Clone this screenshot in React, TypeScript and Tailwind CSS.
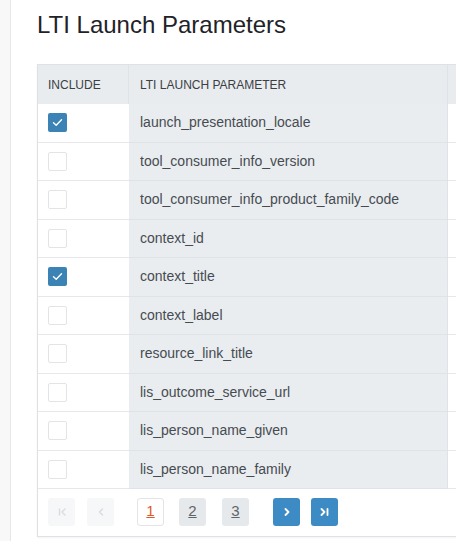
import React from "react";

const rows: { name: string; checked: boolean }[] = [
  { name: "launch_presentation_locale", checked: true },
  { name: "tool_consumer_info_version", checked: false },
  { name: "tool_consumer_info_product_family_code", checked: false },
  { name: "context_id", checked: false },
  { name: "context_title", checked: true },
  { name: "context_label", checked: false },
  { name: "resource_link_title", checked: false },
  { name: "lis_outcome_service_url", checked: false },
  { name: "lis_person_name_given", checked: false },
  { name: "lis_person_name_family", checked: false },
];

function Check({ checked }: { checked: boolean }) {
  if (checked)
    return (
      <div className="w-[19px] h-[19px] rounded-[2px] bg-[#3b82b5] flex items-center justify-center">
        <svg width="11" height="9" viewBox="0 0 11 9" fill="none">
          <path d="M1.5 4.8 L4.2 7.3 L9.5 1.7" stroke="white" strokeWidth="1.4" strokeLinecap="round" strokeLinejoin="round" />
        </svg>
      </div>
    );
  return <div className="w-[19px] h-[19px] rounded-[2px] bg-white border border-[#e2e4e7]" />;
}

function Chevron({ dir, bar, color }: { dir: "l" | "r"; bar?: boolean; color: string }) {
  return (
    <svg width="12" height="10" viewBox="0 0 12 10" fill="none">
      {dir === "r" ? (
        <>
          <path d={bar ? "M2.5 2 L5.5 5 L2.5 8" : "M4.5 2 L7.5 5 L4.5 8"} stroke={color} strokeWidth="1.8" strokeLinecap="round" strokeLinejoin="round" />
          {bar && <path d="M8.5 2 L8.5 8" stroke={color} strokeWidth="1.8" strokeLinecap="round" />}
        </>
      ) : (
        <>
          <path d={bar ? "M9 2 L6 5 L9 8" : "M7.5 2 L4.5 5 L7.5 8"} stroke={color} strokeWidth="1.4" strokeLinecap="round" strokeLinejoin="round" />
          {bar && <path d="M3.5 2 L3.5 8" stroke={color} strokeWidth="1.4" strokeLinecap="round" />}
        </>
      )}
    </svg>
  );
}

export default function App() {
  return (
    <div
      className="flex w-[456px] h-[541px] overflow-hidden bg-white"
      style={{ fontFamily: '"Liberation Sans", Arial, sans-serif' }}
    >
      <div className="w-[11px] shrink-0 bg-[#f8f8f8] border-r border-[#e6e6e6]" />
      <div className="flex-1 pl-[26px] min-w-0">
        <h1 className="pt-[11px] text-[24px] leading-[28px] text-[#1f2328] font-normal whitespace-nowrap">
          LTI Launch Parameters
        </h1>
        <div className="mt-[25px] w-[480px] border-l border-b border-t border-[#dee2e6] shadow-[0_1px_2px_rgba(0,0,0,0.05)]">
          <div className="flex h-[39px] bg-[#e9ecef] text-[12px] text-[#3a3f44] uppercase">
            <div className="w-[91px] shrink-0 pl-[10px] flex items-center border-r border-[#dfe3e7]">Include</div>
            <div className="w-[319px] shrink-0 pl-[11px] flex items-center border-r border-[#dfe3e7]">LTI Launch Parameter</div>
            <div className="flex-1" />
          </div>
          {rows.map((r) => (
            <div key={r.name} className="flex h-[38.5px] text-[14px] text-[#474b50]">
              <div className="w-[91px] shrink-0 pl-[10px] flex items-center bg-white border-b border-[#e6e8eb]">
                <Check checked={r.checked} />
              </div>
              <div className="w-[319px] shrink-0 pl-[11px] flex items-center bg-[#e9edf0] border-b border-r border-[#dfe3e7] whitespace-nowrap">
                {r.name}
              </div>
              <div className="flex-1 bg-white border-b border-[#e6e8eb]" />
            </div>
          ))}
          <div className="flex items-center h-[47px] pl-[10px] pb-[2px] bg-white">
            <div className="w-[27px] h-[28px] rounded-[3px] bg-[#f6f7f8] flex items-center justify-center">
              <Chevron dir="l" bar color="#d8dbdf" />
            </div>
            <div className="ml-[12px] w-[27px] h-[28px] rounded-[3px] bg-[#f6f7f8] flex items-center justify-center">
              <Chevron dir="l" color="#d8dbdf" />
            </div>
            <div className="ml-[23px] w-[27px] h-[28px] rounded-[3px] bg-white border border-[#e2e4e7] flex items-center justify-center text-[15px] text-[#e0592a] underline">
              1
            </div>
            <div className="ml-[15px] w-[27px] h-[28px] rounded-[3px] bg-[#e6e9ec] flex items-center justify-center text-[15px] text-[#606468] underline">
              2
            </div>
            <div className="ml-[16px] w-[27px] h-[28px] rounded-[3px] bg-[#e6e9ec] flex items-center justify-center text-[15px] text-[#606468] underline">
              3
            </div>
            <div className="ml-[24px] w-[27px] h-[28px] rounded-[3px] bg-[#3d8bc4] flex items-center justify-center">
              <Chevron dir="r" color="white" />
            </div>
            <div className="ml-[11px] w-[27px] h-[28px] rounded-[3px] bg-[#3d8bc4] flex items-center justify-center">
              <Chevron dir="r" bar color="white" />
            </div>
          </div>
        </div>
      </div>
    </div>
  );
}
